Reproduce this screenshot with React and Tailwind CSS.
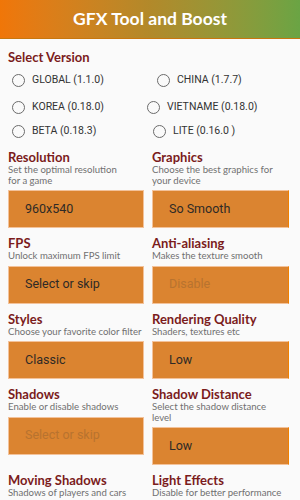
import React from 'react'

// left cell width decides where the right-hand radio starts
const versions = [
  { a: 'GLOBAL (1.1.0)', b: 'CHINA (1.7.7)', w: 'w-[149px]', h: 'h-[24px]' },
  { a: 'KOREA (0.18.0)', b: 'VIETNAME (0.18.0)', w: 'w-[139px]', h: 'h-[24px] mt-[3px]' },
  { a: 'BETA (0.18.3)', b: 'LITE (0.16.0 )', w: 'w-[145px]', h: 'h-[24px]' },
]

function Radio({ label }) {
  return (
    <div className="flex items-center gap-[7px]">
      <span className="w-[13px] h-[13px] rounded-full border-[1.5px] border-[#6b6b6b] shrink-0" />
      <span className="text-[10.5px] text-[#333] whitespace-nowrap" style={{ fontFamily: 'Roboto, sans-serif' }}>{label}</span>
    </div>
  )
}

function Option({ title, desc, value, hint, boxClass = '' }) {
  return (
    <div className="flex flex-col">
      <div className="text-[13px] font-bold text-[#7b1c1c] leading-[16px] whitespace-nowrap" style={{ fontFamily: 'Lato, sans-serif' }}>{title}</div>
      <div className="text-[9.6px] text-[#707070] leading-[10.5px] whitespace-nowrap" style={{ fontFamily: 'Lato, sans-serif' }}>{desc}</div>
      <div className={`mt-[4px] h-[38px] bg-[#db8430] border border-[#f3c29a] flex items-center pl-[16px] ${boxClass}`}>
        <span className={`text-[12.5px] ${hint ? 'text-[#b8732f]' : 'text-[#2e2a26]'}`} style={{ fontFamily: 'Roboto, sans-serif' }}>{value}</span>
      </div>
    </div>
  )
}

export default function App() {
  return (
    <div className="w-[300px] h-[500px] overflow-hidden bg-[#fafafa]">
      <div className="h-[39px] bg-gradient-to-r from-[#f07608] via-[#b2892a] to-[#6aa444] border-b border-[#c8770f] flex items-center justify-center">
        <span className="text-white font-bold text-[17.5px]" style={{ fontFamily: 'Lato, sans-serif' }}>GFX Tool and Boost</span>
      </div>
      <div className="pl-[8px] pr-[11px]">
        <div className="mt-[10px] text-[13px] font-bold text-[#7b1c1c] leading-[16px]" style={{ fontFamily: 'Lato, sans-serif' }}>Select Version</div>
        <div className="mt-[3px] flex flex-col">
          {versions.map((row, i) => (
            <div key={i} className={`flex items-center ${row.h}`}>
              <div className={`${row.w} pl-[4px]`}>
                <Radio label={row.a} />
              </div>
              <Radio label={row.b} />
            </div>
          ))}
        </div>
        <div className="mt-[6px] grid grid-cols-[136px_137px] gap-x-[8px] gap-y-[7px] items-start">
          <Option title="Resolution" desc={<>Set the optimal resolution<br />for a game</>} value="960x540" />
          <Option title="Graphics" desc={<>Choose the best graphics for<br />your device</>} value="So Smooth" boxClass="border-r-[#f08000]" />
          <Option title="FPS" desc="Unlock maximum FPS limit" value="Select or skip" />
          <Option title="Anti-aliasing" desc="Makes the texture smooth" value="Disable" hint boxClass="border-r-[#f08000]" />
          <Option title="Styles" desc="Choose your favorite color filter" value="Classic" />
          <Option title="Rendering Quality" desc="Shaders, textures etc" value="Low" boxClass="border-r-[#f08000]" />
          <Option title="Shadows" desc="Enable or disable shadows" value="Select or skip" hint />
          <Option title="Shadow Distance" desc={<>Select the shadow distance<br />level</>} value="Low" boxClass="border-r-[#f08000]" />
          <Option title="Moving Shadows" desc="Shadows of players and cars" value="Select or skip" />
          <Option title="Light Effects" desc="Disable for better performance" value="Disable" />
        </div>
      </div>
    </div>
  )
}
